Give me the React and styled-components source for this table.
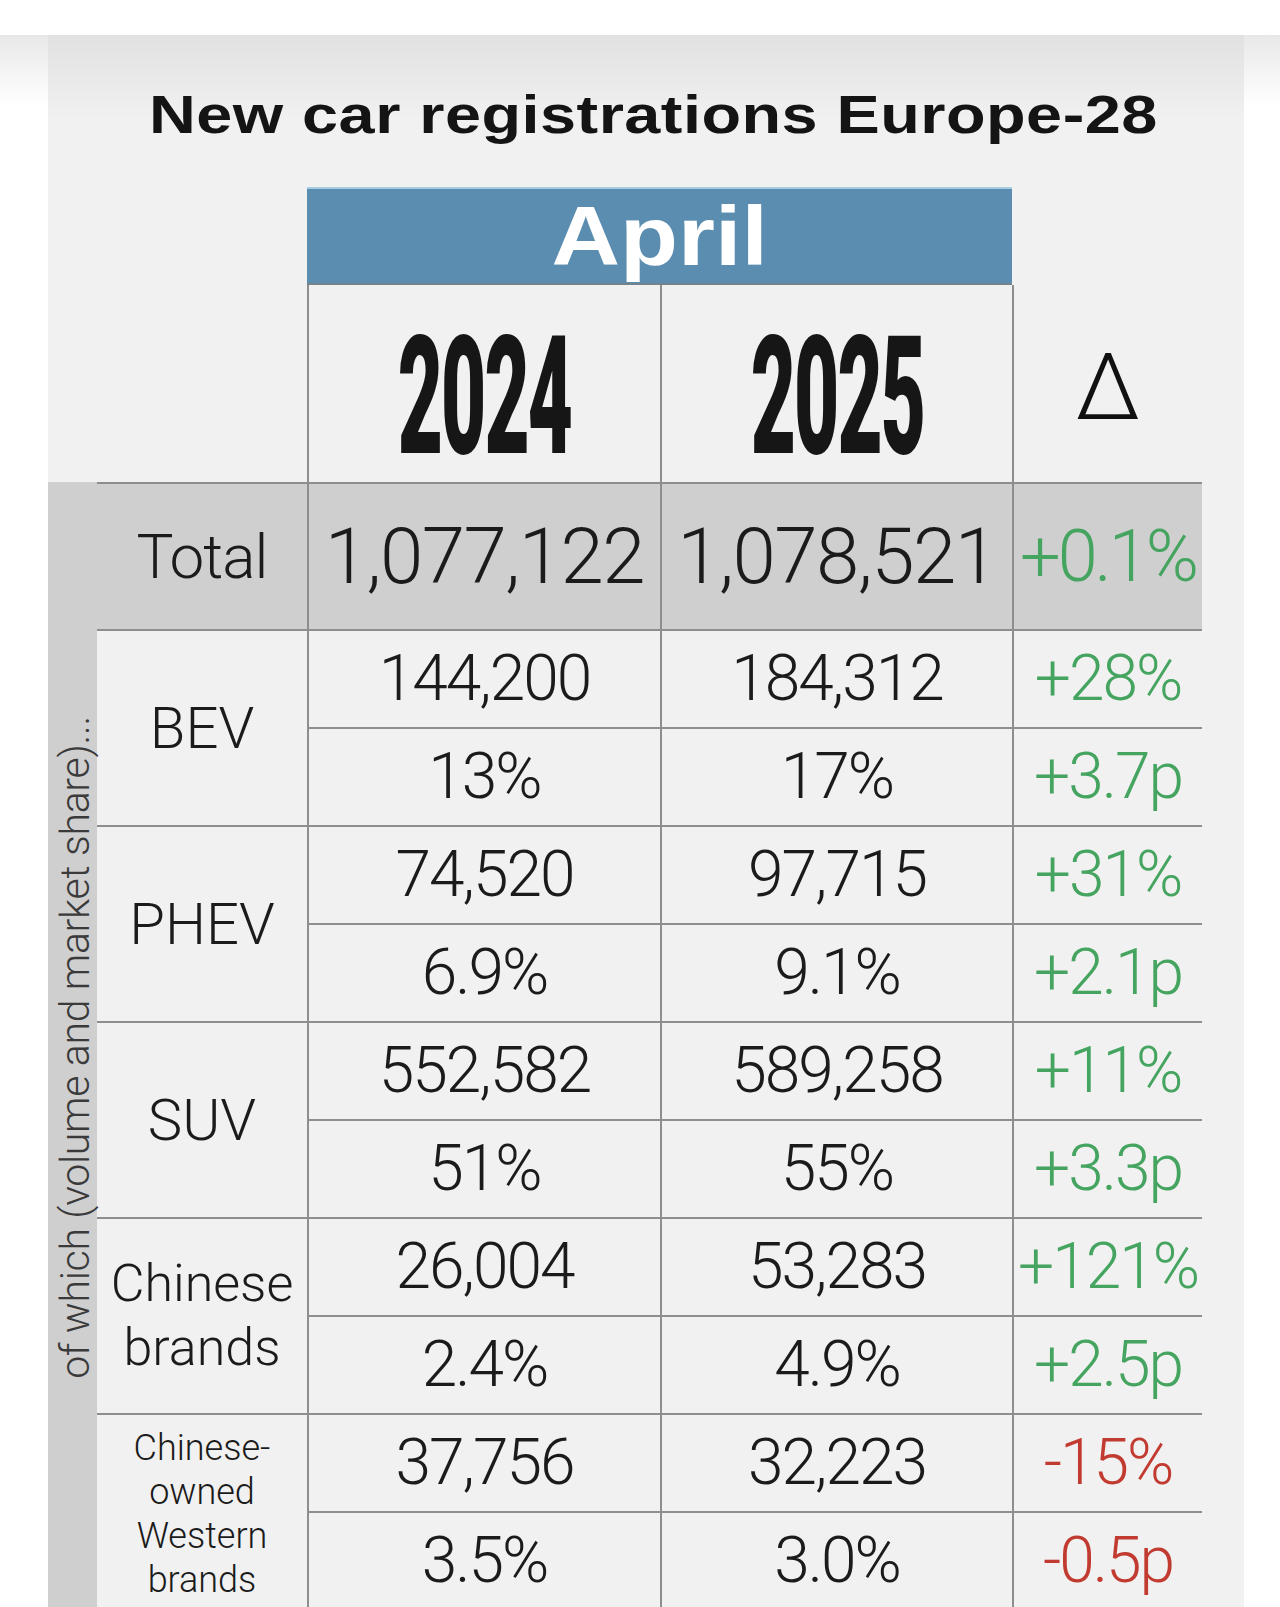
import styled, { createGlobalStyle } from "styled-components";

const LINE = "#8e8e8e";
const GRAY = "#d0cfd0";

const GlobalStyle = createGlobalStyle`
  html, body {
    margin: 0;
    padding: 0;
    overflow: hidden;
    background: #ffffff;
  }
`;

const Page = styled.div`
  min-height: 1607px;
  padding: 35px 0 0 48px;
  background: linear-gradient(to bottom, #ffffff 0, #ffffff 35px, #e8e8e8 35px, #ffffff 105px);
  box-sizing: border-box;
`;

const Card = styled.div`
  width: 1196px;
  min-height: 1572px;
  background: linear-gradient(to bottom, #e1e1e1 0, #f1f1f1 85px, #f1f1f1 100%);
`;

const Title = styled.h1`
  margin: 0;
  height: 152px;
  padding: 6px 0 0 14px;
  box-sizing: border-box;
  display: flex;
  align-items: center;
  justify-content: center;
  font-family: "Liberation Sans", Arial, sans-serif;
  font-weight: 700;
  font-size: 54px;
  line-height: 1;
  color: #141414;
`;

const Stretch = styled.span`
  display: inline-block;
  white-space: nowrap;
  letter-spacing: ${(p) => p.$ls || 0}px;
  transform: scaleX(${(p) => p.$sx});
`;

const Table = styled.div`
  display: grid;
  grid-template-columns: 49px 210px 353px 352px 190px;
  grid-template-rows: 98px 197px 147px repeat(10, 98px);
`;

const Month = styled.div`
  grid-column: 3 / 5;
  grid-row: 1;
  background: #5a8db0;
  border-top: 2px solid #a8cce2;
  border-bottom: 2px solid #74828c;
  box-sizing: border-box;
  display: flex;
  align-items: center;
  justify-content: center;
  font-family: "Liberation Sans", Arial, sans-serif;
  font-weight: 700;
  font-size: 84px;
  color: #ffffff;
  line-height: 1;
`;

const HeadCell = styled.div`
  grid-column: ${(p) => p.$col};
  grid-row: 2;
  border-left: 2px solid ${LINE};
  display: flex;
  align-items: center;
  justify-content: center;
  padding-top: ${(p) => p.$pad || 0}px;
  box-sizing: border-box;
  overflow: visible;
`;

const Year = styled.span`
  display: inline-block;
  font-family: Roboto, "Liberation Sans", sans-serif;
  font-weight: 900;
  font-size: 166px;
  line-height: 1;
  letter-spacing: -4px;
  color: #161616;
  transform: scaleX(0.47);
`;

const DeltaSign = styled.span`
  font-family: Roboto, "DejaVu Sans", sans-serif;
  font-weight: 300;
  font-size: 93px;
  line-height: 1;
  color: #111111;
`;

const Strip = styled.div`
  grid-column: 1;
  grid-row: 3 / 14;
  background: ${GRAY};
  display: flex;
  justify-content: center;
  align-items: flex-start;
`;

const Note = styled.span`
  margin-top: 234px;
  margin-left: 6px;
  writing-mode: vertical-rl;
  transform: rotate(180deg);
  white-space: nowrap;
  font-family: Roboto, "Liberation Sans", sans-serif;
  font-weight: 300;
  font-size: 41px;
  letter-spacing: -0.3px;
  line-height: 1;
  color: #3a3a3a;
`;

const Cell = styled.div`
  grid-column: ${(p) => p.$col};
  grid-row: ${(p) => p.$row};
  background: ${(p) => (p.$shade ? GRAY : "transparent")};
  border-top: 2px solid ${LINE};
  border-left: ${(p) => (p.$divider ? `2px solid ${LINE}` : "none")};
  box-sizing: border-box;
  display: flex;
  align-items: center;
  justify-content: center;
  font-family: Roboto, "Liberation Sans", sans-serif;
  font-weight: 300;
  line-height: 1;
  white-space: nowrap;
  color: ${(p) =>
    p.$tone === "up" ? "#45a45f" : p.$tone === "down" ? "#c23b31" : "#1b1b1b"};
`;

const TotalLabel = styled(Cell)`
  font-size: 62px;
  letter-spacing: -1px;
`;

const TotalValue = styled(Cell)`
  font-size: 78px;
  letter-spacing: -1.5px;
`;

const TotalDelta = styled(Cell)`
  font-size: 72px;
  letter-spacing: -3px;
`;

const Label = styled(Cell)`
  flex-direction: column;
  text-align: center;
  font-size: ${(p) => p.$size}px;
  line-height: ${(p) => p.$lh}px;
  white-space: normal;
  padding-top: ${(p) => p.$pad || 0}px;
`;

const Value = styled(Cell)`
  font-size: 64px;
  letter-spacing: -2px;
`;

const groups = [
  {
    label: ["BEV"],
    size: 58,
    lh: 64,
    rows: [
      ["144,200", "184,312", "+28%", "up"],
      ["13%", "17%", "+3.7p", "up"],
    ],
  },
  {
    label: ["PHEV"],
    size: 58,
    lh: 64,
    rows: [
      ["74,520", "97,715", "+31%", "up"],
      ["6.9%", "9.1%", "+2.1p", "up"],
    ],
  },
  {
    label: ["SUV"],
    size: 58,
    lh: 64,
    rows: [
      ["552,582", "589,258", "+11%", "up"],
      ["51%", "55%", "+3.3p", "up"],
    ],
  },
  {
    label: ["Chinese", "brands"],
    size: 52,
    lh: 64,
    rows: [
      ["26,004", "53,283", "+121%", "up"],
      ["2.4%", "4.9%", "+2.5p", "up"],
    ],
  },
  {
    label: ["Chinese-", "owned", "Western", "brands"],
    size: 36,
    lh: 44,
    pad: 4,
    rows: [
      ["37,756", "32,223", "-15%", "down"],
      ["3.5%", "3.0%", "-0.5p", "down"],
    ],
  },
];

const App = () => {
  return (
    <>
      <GlobalStyle />
      <Page>
        <Card>
          <Title>
            <Stretch $sx={1.2} $ls={0.4}>
              New car registrations Europe-28
            </Stretch>
          </Title>
          <Table>
            <Month>
              <Stretch $sx={1.13}>April</Stretch>
            </Month>
            <HeadCell $col={3} $pad={26}>
              <Year>2024</Year>
            </HeadCell>
            <HeadCell $col={4} $pad={26}>
              <Year>2025</Year>
            </HeadCell>
            <HeadCell $col={5} $pad={8}>
              <DeltaSign>Δ</DeltaSign>
            </HeadCell>

            <Strip>
              <Note>of which (volume and market share)...</Note>
            </Strip>

            <TotalLabel $col={2} $row={3} $shade>
              Total
            </TotalLabel>
            <TotalValue $col={3} $row={3} $shade $divider>
              1,077,122
            </TotalValue>
            <TotalValue $col={4} $row={3} $shade $divider>
              1,078,521
            </TotalValue>
            <TotalDelta $col={5} $row={3} $shade $divider $tone="up">
              +0.1%
            </TotalDelta>

            {groups.map((g, gi) => {
              const row = 4 + gi * 2;
              return [
                <Label
                  key={`l${gi}`}
                  $col={2}
                  $row={`${row} / span 2`}
                  $size={g.size}
                  $lh={g.lh}
                  $pad={g.pad}
                >
                  {g.label.map((line) => (
                    <span key={line}>{line}</span>
                  ))}
                </Label>,
                ...g.rows.map((r, ri) => [
                  <Value key={`a${gi}${ri}`} $col={3} $row={row + ri} $divider>
                    {r[0]}
                  </Value>,
                  <Value key={`b${gi}${ri}`} $col={4} $row={row + ri} $divider>
                    {r[1]}
                  </Value>,
                  <Value key={`c${gi}${ri}`} $col={5} $row={row + ri} $divider $tone={r[3]}>
                    {r[2]}
                  </Value>,
                ]),
              ];
            })}
          </Table>
        </Card>
      </Page>
    </>
  );
};

export default App;
